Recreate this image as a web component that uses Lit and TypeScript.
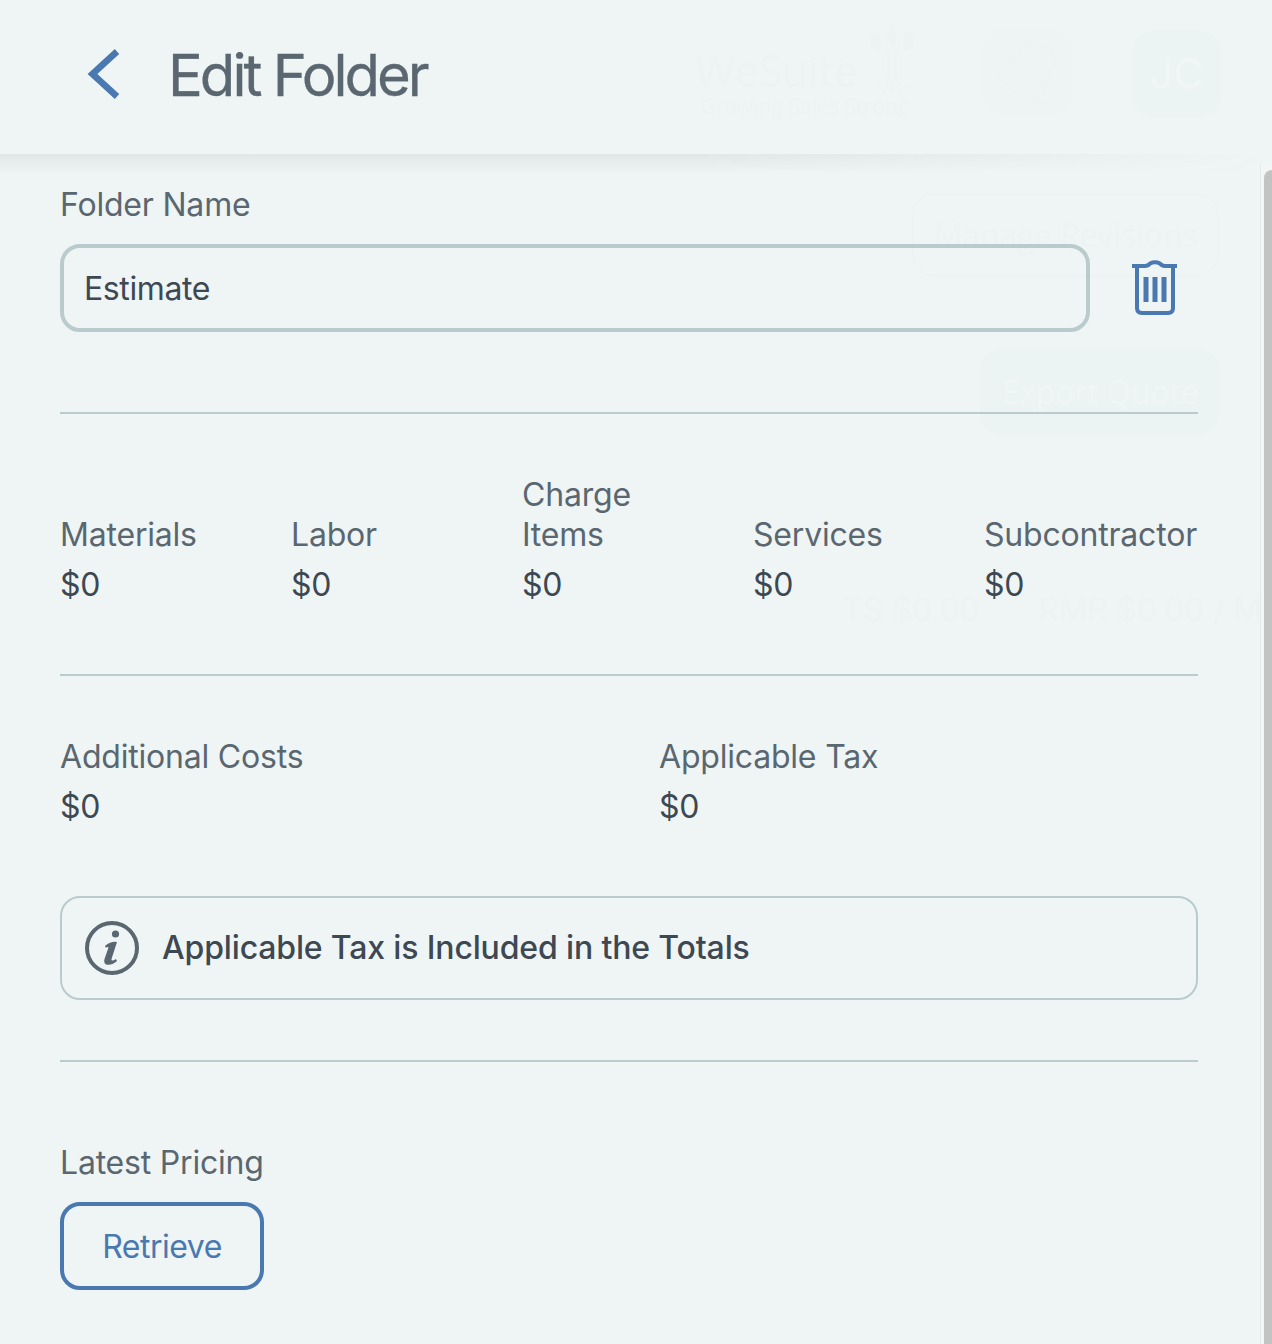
import { LitElement, html, css } from "lit";
import { customElement } from "lit/decorators.js";

@customElement("app-root")
export class AppRoot extends LitElement {
  static styles = css`
    :host {
      display: block;
      position: relative;
      height: 1344px;
      overflow: hidden;
      background: #eff5f5;
      color: #5a6770;
      font-family: Inter, "Noto Sans", sans-serif;
      font-size: 32px;
      line-height: 40px;
      letter-spacing: -0.2px;
    }
    header {
      position: relative;
      display: flex;
      align-items: center;
      height: 154px;
      padding: 0 0 4px 85px;
      box-sizing: border-box;
      gap: 45px;
    }
    .shade {
      position: absolute;
      left: 0;
      right: 0;
      top: 154px;
      height: 20px;
      background: linear-gradient(180deg, rgba(120, 130, 130, 0.12), rgba(120, 130, 130, 0));
      -webkit-mask-image: linear-gradient(90deg, #000 55%, transparent 100%);
      mask-image: linear-gradient(90deg, #000 55%, transparent 100%);
    }
    .back {
      display: block;
      width: 38px;
      height: 52px;
      flex: none;
    }
    h1 {
      margin: 0;
      font-size: 58px;
      line-height: 72px;
      font-weight: 400;
      letter-spacing: -3px;
      color: #5a6770;
      -webkit-text-stroke: 0.3px #5a6770;
    }
    main {
      position: relative;
      padding: 31px 74px 0 60px;
    }
    .field-row {
      display: flex;
      align-items: center;
      margin-top: 19px;
    }
    .input {
      width: 1030px;
      height: 88px;
      box-sizing: border-box;
      border: 4px solid #b9cbcd;
      border-radius: 20px;
      padding: 2px 20px 0;
      display: flex;
      align-items: center;
      color: #3e4852;
      letter-spacing: -0.4px;
      flex: none;
    }
    .trash {
      display: block;
      width: 46px;
      height: 56px;
      margin-left: 42px;
      flex: none;
    }
    hr {
      border: 0;
      height: 2px;
      background: #b9cbcd;
      margin: 0;
    }
    .hr1 {
      margin-top: 80px;
    }
    .five {
      display: grid;
      grid-template-columns: repeat(4, 180px) 1fr;
      column-gap: 51px;
      align-items: end;
      margin-top: 61px;
    }
    .value {
      color: #3e4852;
      margin-top: 10px;
    }
    .hr2 {
      margin-top: 69px;
    }
    .two {
      display: grid;
      grid-template-columns: 599px 1fr;
      margin-top: 61px;
    }
    .note {
      display: flex;
      align-items: center;
      height: 104px;
      box-sizing: border-box;
      margin-top: 69px;
      border: 2px solid #b9cbcd;
      border-radius: 20px;
      padding-left: 23px;
      gap: 23px;
      color: #3e4852;
      font-weight: 500;
      letter-spacing: -0.15px;
    }
    .info {
      display: block;
      width: 54px;
      height: 54px;
      flex: none;
    }
    .hr3 {
      margin-top: 60px;
    }
    .latest {
      margin-top: 81px;
    }
    button {
      display: block;
      width: 204px;
      height: 88px;
      margin-top: 19px;
      border: 4px solid #4a78b0;
      border-radius: 20px;
      background: transparent;
      color: #4a78b0;
      font: inherit;
      letter-spacing: -0.5px;
      padding: 2px 0 0;
    }
    .scroll {
      position: absolute;
      left: 1260px;
      top: 164px;
      bottom: 0;
      width: 12px;
      background: #f4f6f6;
      border-left: 1px solid #e4e8e8;
      box-sizing: border-box;
    }
    .scroll i {
      position: absolute;
      left: 3px;
      right: 0;
      top: 6px;
      bottom: 0;
      background: #c2c4c3;
      border-radius: 8px 0 0 0;
    }
    .ghost {
      position: absolute;
      color: #edf3f3;
      white-space: nowrap;
    }
    .logo {
      left: 695px;
      top: 48px;
      font-size: 43px;
      line-height: 46px;
      font-weight: 500;
      font-family: "Open Sans", sans-serif;
    }
    .tag {
      left: 700px;
      top: 95px;
      font-size: 21.5px;
      line-height: 22px;
      font-family: "Open Sans", sans-serif;
    }
    .tree {
      position: absolute;
      left: 868px;
      top: 22px;
      width: 48px;
      height: 74px;
    }
    .tile {
      position: absolute;
      box-sizing: border-box;
      border-radius: 22px;
      display: flex;
      align-items: center;
      justify-content: center;
      white-space: nowrap;
    }
    .chat {
      left: 983px;
      top: 29px;
      width: 89px;
      height: 88px;
      background: #eef4f4;
    }
    .chat svg {
      display: block;
      width: 89px;
      height: 88px;
    }
    .jc {
      left: 1132px;
      top: 30px;
      width: 89px;
      height: 88px;
      background: #ecf3f3;
      color: #f0f5f5;
      font-size: 42px;
      font-weight: 500;
    }
    .manage {
      left: 912px;
      top: 193px;
      width: 307px;
      height: 84px;
      border: 2px solid #edf3f3;
      color: #edf3f3;
      font-family: "Open Sans", sans-serif;
    }
    .export {
      left: 980px;
      top: 348px;
      width: 240px;
      height: 88px;
      background: #ecf3f3;
      color: #f0f5f5;
      font-family: "Open Sans", sans-serif;
    }
    .ts {
      left: 842px;
      top: 590px;
    }
    .rmr {
      left: 1038px;
      top: 590px;
    }
  `;

  render() {
    return html`
      <div class="ghost logo">WeSuite</div>
      <div class="ghost tag">Growing Sales Strong</div>
      <svg class="tree" viewBox="0 0 48 74" fill="none" stroke="#edf3f3" stroke-width="2">
        <path fill="#edf3f3" stroke="none" d="M8 10 Q14 14 12 28 Q2 28 2 20 Q2 14 8 10 Z M24 0 Q30 10 28 24 Q20 24 19 14 Q19 6 24 0 Z M40 8 Q47 14 46 22 Q44 30 36 28 Q32 18 40 8 Z" />
        <path d="M20 30 V56 Q20 62 8 66 M28 30 V56 Q28 62 42 66 M24 58 L24 72 M20 62 L14 72 M28 62 L34 72" />
      </svg>
      <div class="tile chat">
        <svg viewBox="0 0 89 88" fill="none" stroke="#ecf3f3" stroke-width="3">
          <path d="M15 46 L34 28 Q38 16 52 16 Q70 16 71 28 Q72 38 62 54 Q58 62 62 74 L40 72 Q22 56 15 46 Z" />
        </svg>
      </div>
      <div class="tile jc">JC</div>
      <div class="tile manage">Manage Revisions</div>
      <div class="tile export">Export Quote</div>
      <div class="ghost ts">TS $0.00</div>
      <div class="ghost rmr">RMR $0.00 / Mo</div>
      <header>
        <svg class="back" viewBox="0 0 38 52" fill="none" stroke="#4a78b0" stroke-width="6.5">
          <path d="M32 2.5 L7.4 25 L32 47.5" />
        </svg>
        <h1>Edit Folder</h1>
      </header>
      <div class="shade"></div>
      <main>
        <div>Folder Name</div>
        <div class="field-row">
          <div class="input">Estimate</div>
          <svg class="trash" viewBox="0 0 46 56" fill="none" stroke="#4a78b0" stroke-width="4">
            <path d="M0 6 H13 Q16 6 18 3.5 Q23 1 28 3.5 Q30 6 33 6 H45" />
            <path d="M5 6 V48 Q5 53 10 53 H36 Q41 53 41 48 V6" />
            <path stroke-width="5" d="M14 17 V42 M23 17 V42 M32 17 V42" />
          </svg>
        </div>
        <hr class="hr1" />
        <div class="five">
          ${["Materials", "Labor", "Charge Items", "Services", "Subcontractor"].map(
            (l) => html`<div><div>${l}</div><div class="value">$0</div></div>`
          )}
        </div>
        <hr class="hr2" />
        <div class="two">
          <div><div>Additional Costs</div><div class="value">$0</div></div>
          <div><div>Applicable Tax</div><div class="value">$0</div></div>
        </div>
        <div class="note">
          <svg class="info" viewBox="0 0 54 54">
            <circle cx="27" cy="27" r="25" fill="none" stroke="#5a6770" stroke-width="4" />
            <circle cx="30.5" cy="13" r="3.6" fill="#5a6770" />
            <path d="M20 25 Q26 20 32 21 L26.5 38 Q26 41 31 38 L32 40 Q26 45 21 43.5 Q18.5 42 19.5 38 L23.5 26.5 Q22.5 25.5 20.8 26.8 Z" fill="#5a6770" />
          </svg>
          Applicable Tax is Included in the Totals
        </div>
        <hr class="hr3" />
        <div class="latest">Latest Pricing</div>
        <button>Retrieve</button>
      </main>
      <div class="scroll"><i></i></div>
    `;
  }
}
